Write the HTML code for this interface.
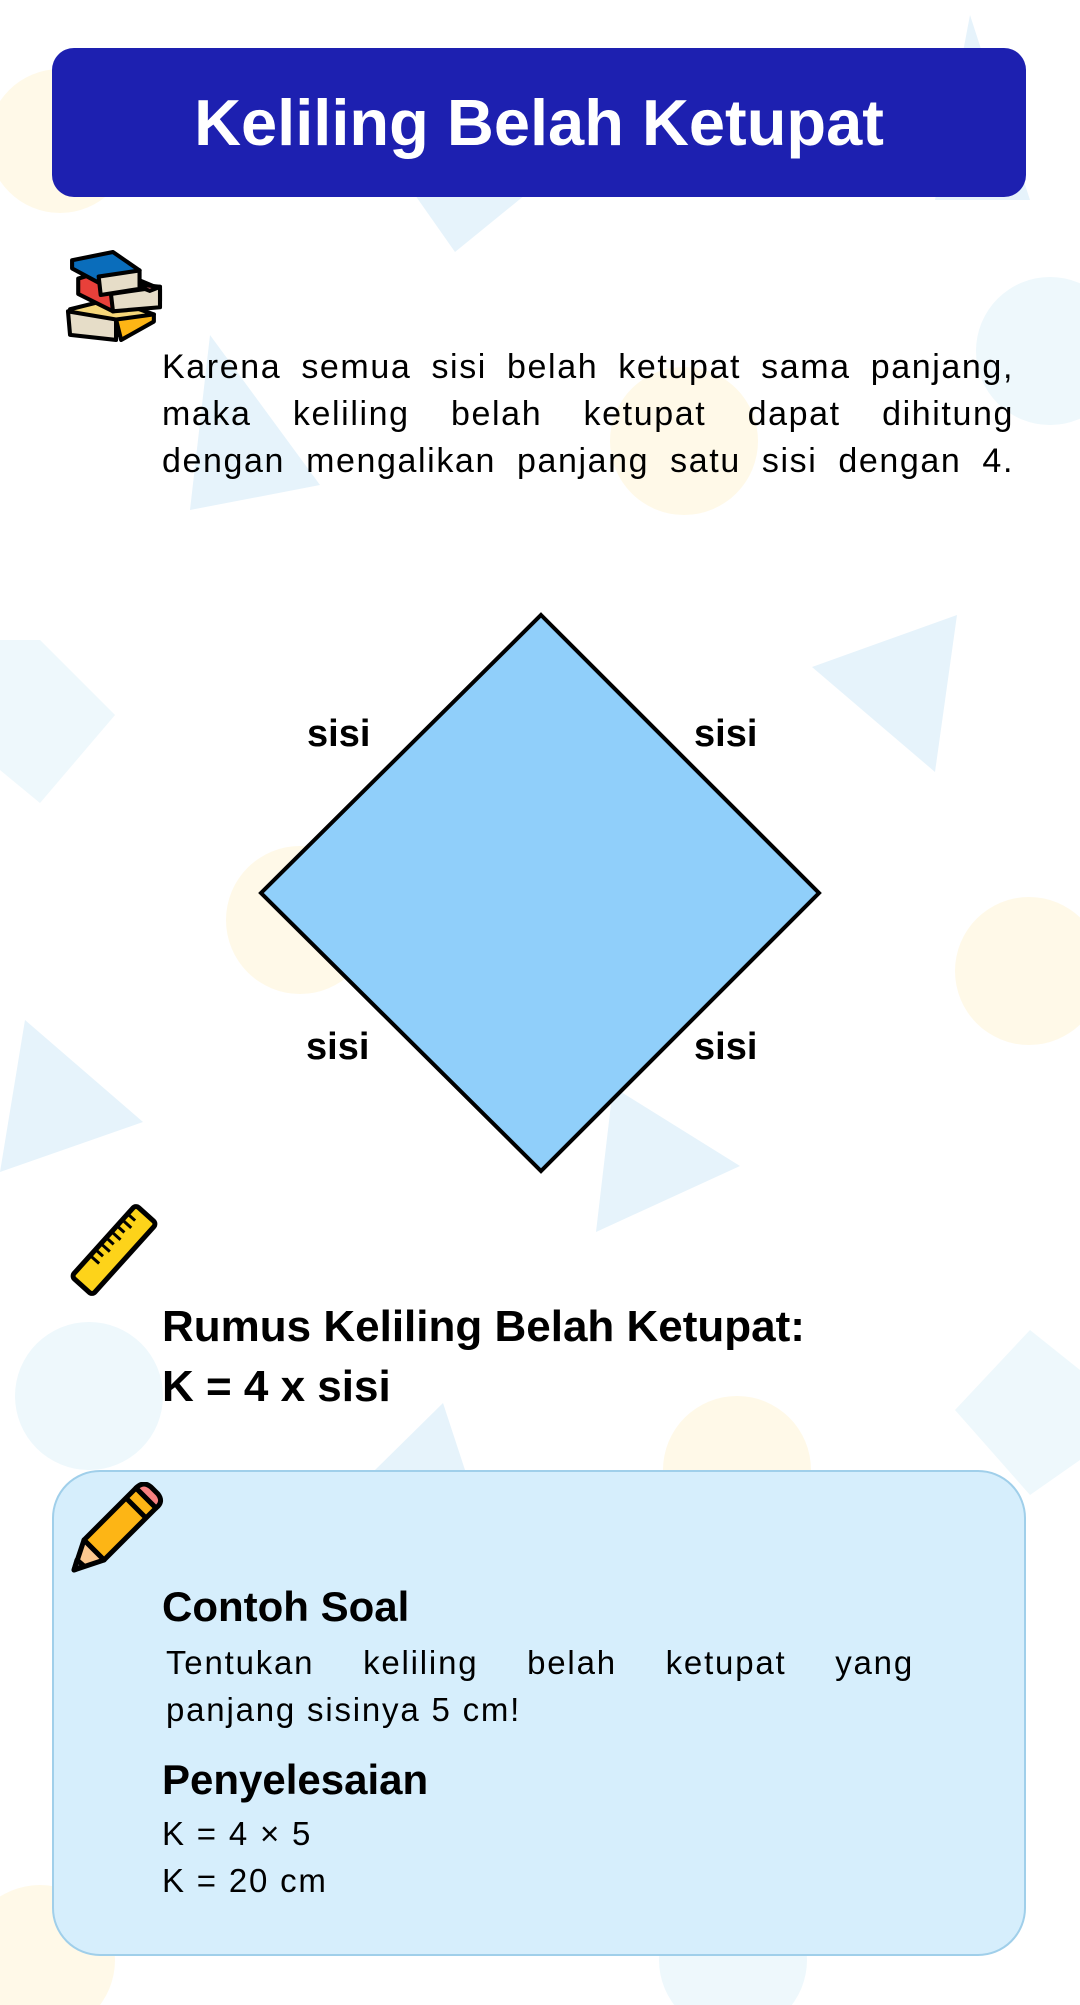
<!DOCTYPE html>
<html><head><meta charset="utf-8"><style>
*{margin:0;padding:0;box-sizing:border-box}
body{width:1080px;height:2005px;position:relative;background:#fff;font-family:"Liberation Sans",sans-serif;color:#000;overflow:hidden}
.abs{position:absolute}
.hdr{left:52px;top:48px;width:974px;height:149px;background:#1D20B0;border-radius:22px;color:#fff;font-weight:bold;font-size:65px;text-align:center;line-height:149px;letter-spacing:0px}
.p{left:162px;top:344px;width:852px;font-size:34px;line-height:47px;letter-spacing:1.6px}
.p div,.t div{text-align:justify;text-align-last:justify}
.p div.l,.t div.l{text-align-last:left}
.sisi{font-weight:bold;font-size:38px;line-height:40px}
.h{font-weight:bold;font-size:44px;left:162px}
.box{left:52px;top:1470px;width:974px;height:486px;background:#D6EEFC;border:2px solid #A0CFEA;border-radius:48px}
.t{font-size:33px;letter-spacing:1.8px;left:166px;width:748px;line-height:47px}
</style></head><body>
<svg class="abs" style="left:0;top:0" width="1080" height="2005">
<g fill="#FFF9E8"><circle cx="60" cy="141" r="72"/><circle cx="684" cy="441" r="74"/><circle cx="300" cy="920" r="74"/><circle cx="1029" cy="971" r="74"/><circle cx="737" cy="1470" r="74"/><circle cx="40" cy="1960" r="75"/></g>
<g fill="#EEF8FC"><circle cx="1050" cy="351" r="74"/><circle cx="89" cy="1396" r="74"/><circle cx="733" cy="1960" r="74"/>
<polygon points="0,640 40,640 115,715 40,803 0,770"/><polygon points="1030,1330 1080,1370 1080,1460 1030,1495 955,1410"/></g>
<g fill="#E6F3FB"><polygon points="970,15 1030,200 935,200"/><polygon points="415,195 525,195 455,252"/><polygon points="210,335 320,485 190,510"/><polygon points="812,667 957,615 935,772"/><polygon points="25,1020 143,1122 0,1172"/><polygon points="613,1087 740,1166 596,1232"/><polygon points="443,1403 465,1470 375,1470"/></g>
</svg>
<div class="abs hdr">Keliling Belah Ketupat</div>
<svg class="abs" style="left:64px;top:250px" width="100" height="92" viewBox="16 12 94 90">
<g stroke="#000" stroke-width="4" stroke-linejoin="round">
<polygon points="20,70 60,60 102,75 65,96 20,90" fill="#F6D77A"/>
<polygon points="65,80 102,75 102,82 70,100" fill="#FDB515"/>
<polygon points="18,72 65,80 65,100 20,95" fill="#E6DDC8"/>
<polygon points="28,40 60,30 108,50 108,62 62,72 28,55" fill="#E8403A"/>
<polygon points="60,55 108,48 108,68 62,72" fill="#E6DDC8"/>
<polygon points="80,45 108,48 98,52" fill="#F07A7A"/>
<polygon points="22,22 62,14 88,32 48,44 22,30" fill="#0A6DBB"/>
<polygon points="48,38 88,32 88,50 50,56" fill="#E6DDC8"/>
</g></svg>
<div class="abs p"><div>Karena semua sisi belah ketupat sama panjang,</div><div>maka keliling belah ketupat dapat dihitung</div><div>dengan mengalikan panjang satu sisi dengan 4.</div></div>
<svg class="abs" style="left:0;top:0" width="1080" height="1200">
<polygon points="541,615 819,893 541,1171 261,893" fill="#90CFFA" stroke="#000" stroke-width="4"/>
</svg>
<div class="abs sisi" style="left:307px;top:714px">sisi</div>
<div class="abs sisi" style="left:694px;top:714px">sisi</div>
<div class="abs sisi" style="left:306px;top:1027px">sisi</div>
<div class="abs sisi" style="left:694px;top:1027px">sisi</div>
<svg class="abs" style="left:64px;top:1200px" width="100" height="100" viewBox="0 0 100 100">
<g transform="rotate(-48 50 50)"><rect x="2" y="36" width="96" height="28" rx="4" fill="#FDD31A" stroke="#000" stroke-width="5"/>
<g stroke="#000" stroke-width="3"><line x1="30" y1="38" x2="30" y2="48"/><line x1="38" y1="38" x2="38" y2="46"/><line x1="46" y1="38" x2="46" y2="48"/><line x1="54" y1="38" x2="54" y2="46"/><line x1="62" y1="38" x2="62" y2="48"/><line x1="70" y1="38" x2="70" y2="46"/><line x1="78" y1="38" x2="78" y2="48"/><line x1="86" y1="38" x2="86" y2="46"/></g></g></svg>
<div class="abs h" style="top:1302px">Rumus Keliling Belah Ketupat:</div>
<div class="abs h" style="top:1362px">K = 4 x sisi</div>
<div class="abs box"></div>
<svg class="abs" style="left:64px;top:1482px" width="100" height="100" viewBox="0 0 100 100">
<g stroke="#000" stroke-width="5" stroke-linejoin="round">
<path d="M72 6 L92 26 L40 78 L20 58 Z" fill="#FDB515"/>
<path d="M72 6 Q80 -2 88 6 L94 12 Q100 20 92 26 L80 14 Z" fill="#F78080"/>
<path d="M20 58 L40 78 L10 88 Z" fill="#FCC890"/>
<path d="M13 78 L20 84 L10 88 Z" fill="#888"/>
<line x1="62" y1="16" x2="82" y2="36"/></g></svg>
<div class="abs h" style="top:1583px;font-size:42px">Contoh Soal</div>
<div class="abs t" style="top:1639px"><div>Tentukan keliling belah ketupat yang</div><div class="l">panjang sisinya 5 cm!</div></div>
<div class="abs h" style="top:1756px;font-size:42px">Penyelesaian</div>
<div class="abs t" style="top:1810px;left:162px">K = 4 × 5</div>
<div class="abs t" style="top:1857px;left:162px">K = 20 cm</div>
</body></html>
